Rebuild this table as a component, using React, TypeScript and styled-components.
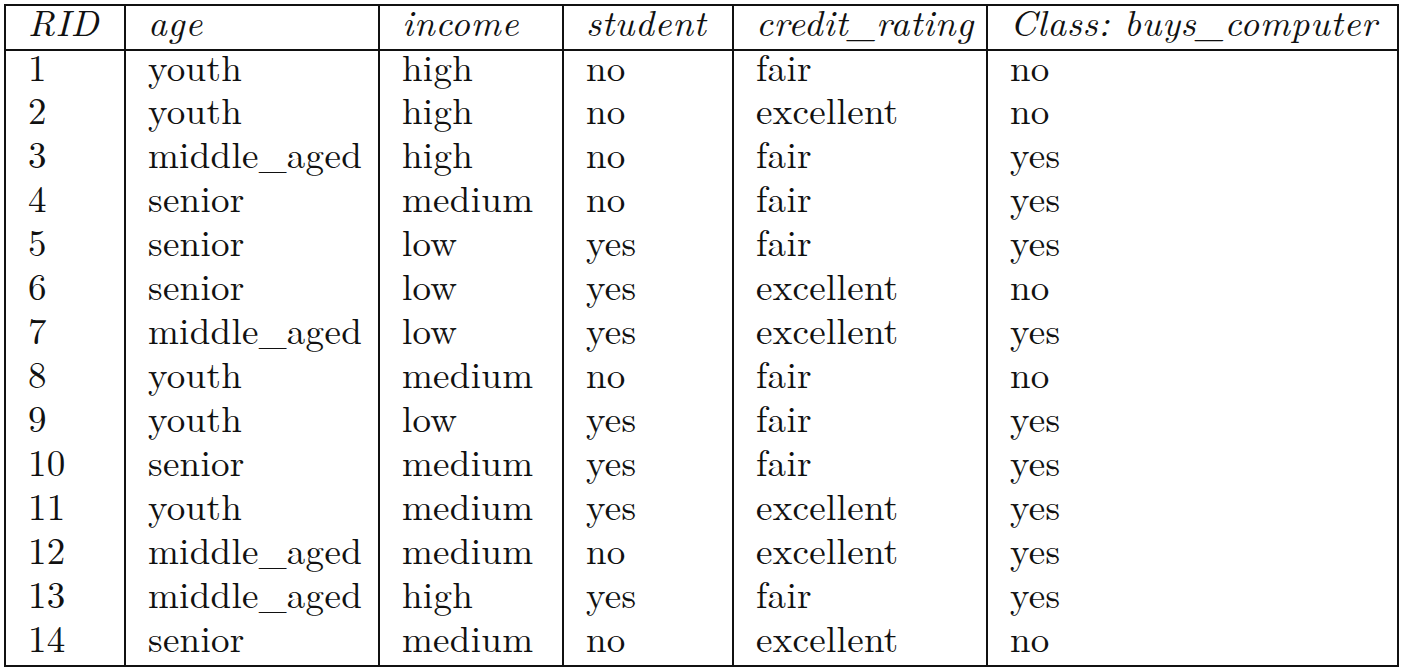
import styled, { createGlobalStyle } from "styled-components";

/* --------------------------------------------------------
   DATA
-------------------------------------------------------- */
const columns = ["RID", "age", "income", "student", "credit_rating", "Class: buys_computer"];
const widths = [120, 254, 184, 170, 254, 411];

const rows: string[][] = [
  ["1", "youth", "high", "no", "fair", "no"],
  ["2", "youth", "high", "no", "excellent", "no"],
  ["3", "middle_aged", "high", "no", "fair", "yes"],
  ["4", "senior", "medium", "no", "fair", "yes"],
  ["5", "senior", "low", "yes", "fair", "yes"],
  ["6", "senior", "low", "yes", "excellent", "no"],
  ["7", "middle_aged", "low", "yes", "excellent", "yes"],
  ["8", "youth", "medium", "no", "fair", "no"],
  ["9", "youth", "low", "yes", "fair", "yes"],
  ["10", "senior", "medium", "yes", "fair", "yes"],
  ["11", "youth", "medium", "yes", "excellent", "yes"],
  ["12", "middle_aged", "medium", "no", "excellent", "yes"],
  ["13", "middle_aged", "high", "yes", "fair", "yes"],
  ["14", "senior", "medium", "no", "excellent", "no"],
];

/* --------------------------------------------------------
   STYLES
-------------------------------------------------------- */
const GlobalStyle = createGlobalStyle`
  html, body {
    margin: 0;
    padding: 0;
    background: #ffffff;
  }
`;

const Page = styled.div`
  padding: 4px;
  width: 1401px;
  box-sizing: border-box;
`;

const Table = styled.table`
  border-collapse: collapse;
  table-layout: fixed;
  width: 1395px;
  border: 2px solid #111;
  color: #111;
`;

const HeadRow = styled.tr`
  height: 45px;
`;

const BodyRow = styled.tr`
  height: 44px;
`;

const HeadCell = styled.th`
  border-left: 2px solid #111;
  border-right: 2px solid #111;
  border-bottom: 2px solid #111;
  padding: 0 0 0 22px;
  vertical-align: top;
  text-align: left;
  font-family: "Latin Modern Roman", "Liberation Serif", serif;
  font-size: 37px;
  line-height: 29px;
  font-style: italic;
  font-weight: 400;
  letter-spacing: 0.6px;
  white-space: nowrap;
`;

const Cell = styled.td`
  border-left: 2px solid #111;
  border-right: 2px solid #111;
  padding: 0 0 0 22px;
  vertical-align: top;
  font-family: "Latin Modern Roman", "Liberation Serif", serif;
  font-size: 37px;
  line-height: 30px;
  letter-spacing: 0.3px;
  white-space: nowrap;
`;

export default function App() {
  return (
    <Page>
      <GlobalStyle />
      <Table>
        <colgroup>
          {widths.map((w, i) => (
            <col key={i} style={{ width: w }} />
          ))}
        </colgroup>
        <thead>
          <HeadRow>
            {columns.map((c) => (
              <HeadCell key={c}>{c}</HeadCell>
            ))}
          </HeadRow>
        </thead>
        <tbody>
          {rows.map((r) => (
            <BodyRow key={r[0]}>
              {r.map((v, i) => (
                <Cell key={i}>{v}</Cell>
              ))}
            </BodyRow>
          ))}
        </tbody>
      </Table>
    </Page>
  );
}
